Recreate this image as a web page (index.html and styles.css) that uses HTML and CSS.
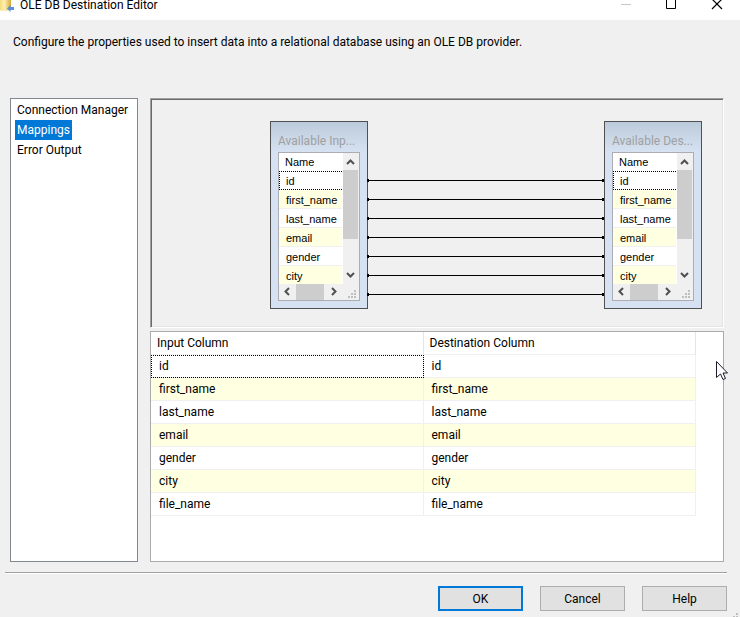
FILE: index.html
```
<!DOCTYPE html>
<html lang="en">
<head>
    <meta charset="UTF-8">
    <meta name="viewport" content="width=device-width, initial-scale=1.0">
    <title>OLE DB Destination Editor</title>
    <link rel="stylesheet" href="styles.css">
</head>
<body>
    <header class="titlebar">
        <svg class="app-icon" width="14" height="12" viewBox="0 0 14 12">
            <defs>
                <linearGradient id="gold">
                    <stop offset="0" stop-color="#f6dc7c"/>
                    <stop offset="0.4" stop-color="#fdf0b4"/>
                    <stop offset="1" stop-color="#d9a830"/>
                </linearGradient>
            </defs>
            <path d="M0 0H11V9Q8 11 4 11Q1 11 0 10Z" fill="url(#gold)"/>
            <path d="M7 8.500L10.500 5V7H14V10H10.500V12Z" fill="#5b8fd6"/>
        </svg>
        <h1>OLE DB Destination Editor</h1>
        <div class="window-buttons">
            <button type="button" aria-label="Minimize" disabled>
                <svg width="12" height="12" viewBox="0 0 12 12"><path d="M2 4.500H12" stroke="#c8c8c8"/></svg>
            </button>
            <button type="button" aria-label="Maximize">
                <svg width="12" height="12" viewBox="0 0 12 12"><path d="M1.500 -1.500H10.500V8.500H1.500Z" fill="none" stroke="#000"/></svg>
            </button>
            <button type="button" aria-label="Close">
                <svg width="12" height="12" viewBox="0 0 12 12"><path d="M1 -1L11 9M11 -1L1 9" stroke="#000" stroke-width="1.200"/></svg>
            </button>
        </div>
    </header>

    <p class="intro">Configure the properties used to insert data into a relational database using an OLE DB provider.</p>

    <main class="editor">
        <nav class="pages">
            <a href="#connection">Connection Manager</a>
            <a href="#mappings" class="selected">Mappings</a>
            <a href="#errors">Error Output</a>
        </nav>

        <div class="content">
            <section class="canvas">
                <div class="node">
                    <h2>Available Inp...</h2>
                    <div class="list">
                        <div class="list-rows">
                            <table>
                                <thead><tr><th>Name</th></tr></thead>
                                <tbody>
                                    <tr class="focused"><td>id</td></tr>
                                    <tr><td>first_name</td></tr>
                                    <tr><td>last_name</td></tr>
                                    <tr><td>email</td></tr>
                                    <tr><td>gender</td></tr>
                                    <tr><td>city</td></tr>
                                </tbody>
                            </table>
                        </div>
                        <div class="vscroll">
                            <svg width="15" height="17" viewBox="0 0 15 17"><path d="M4 11L7.500 7.500L11 11" class="arrow"/></svg>
                            <span class="thumb"></span>
                            <svg width="15" height="17" viewBox="0 0 15 17"><path d="M4 6L7.500 9.500L11 6" class="arrow"/></svg>
                        </div>
                        <div class="hscroll">
                            <svg width="17" height="16" viewBox="0 0 17 16"><path d="M10 4L6.500 7.500L10 11" class="arrow"/></svg>
                            <span class="thumb"></span>
                            <svg width="19" height="16" viewBox="0 0 19 16"><path d="M8 4L11.500 7.500L8 11" class="arrow"/></svg>
                        </div>
                        <svg class="grip" width="15" height="16" viewBox="0 0 15 16"><path d="M11 6h2v2h-2zM8 9h2v2h-2zM11 9h2v2h-2zM5 12h2v2h-2zM8 12h2v2h-2zM11 12h2v2h-2z"/></svg>
                    </div>
                </div>

                <div class="links">
                    <span></span>
                    <span></span>
                    <span></span>
                    <span></span>
                    <span></span>
                    <span></span>
                    <span></span>
                </div>

                <div class="node">
                    <h2>Available Des...</h2>
                    <div class="list">
                        <div class="list-rows">
                            <table>
                                <thead><tr><th>Name</th></tr></thead>
                                <tbody>
                                    <tr class="focused"><td>id</td></tr>
                                    <tr><td>first_name</td></tr>
                                    <tr><td>last_name</td></tr>
                                    <tr><td>email</td></tr>
                                    <tr><td>gender</td></tr>
                                    <tr><td>city</td></tr>
                                </tbody>
                            </table>
                        </div>
                        <div class="vscroll">
                            <svg width="15" height="17" viewBox="0 0 15 17"><path d="M4 11L7.500 7.500L11 11" class="arrow"/></svg>
                            <span class="thumb"></span>
                            <svg width="15" height="17" viewBox="0 0 15 17"><path d="M4 6L7.500 9.500L11 6" class="arrow"/></svg>
                        </div>
                        <div class="hscroll">
                            <svg width="17" height="16" viewBox="0 0 17 16"><path d="M10 4L6.500 7.500L10 11" class="arrow"/></svg>
                            <span class="thumb"></span>
                            <svg width="19" height="16" viewBox="0 0 19 16"><path d="M8 4L11.500 7.500L8 11" class="arrow"/></svg>
                        </div>
                        <svg class="grip" width="15" height="16" viewBox="0 0 15 16"><path d="M11 6h2v2h-2zM8 9h2v2h-2zM11 9h2v2h-2zM5 12h2v2h-2zM8 12h2v2h-2zM11 12h2v2h-2z"/></svg>
                    </div>
                </div>
            </section>

            <section class="grid">
                <table>
                    <thead>
                        <tr><th>Input Column</th><th>Destination Column</th></tr>
                    </thead>
                    <tbody>
                        <tr><td class="focused">id</td><td>id</td></tr>
                        <tr><td>first_name</td><td>first_name</td></tr>
                        <tr><td>last_name</td><td>last_name</td></tr>
                        <tr><td>email</td><td>email</td></tr>
                        <tr><td>gender</td><td>gender</td></tr>
                        <tr><td>city</td><td>city</td></tr>
                        <tr><td>file_name</td><td>file_name</td></tr>
                    </tbody>
                </table>
                <svg class="cursor" width="13" height="20" viewBox="0 0 13 20"><path d="M0.500 0.500V16.500L4.500 13L7 18.500L9.500 17.500L7 12H11.500Z" fill="#fff" stroke="#1a1a2a"/></svg>
            </section>
        </div>
    </main>

    <footer class="actions">
        <button type="button" class="default">OK</button>
        <button type="button">Cancel</button>
        <button type="button">Help</button>
    </footer>
    <svg class="size-grip" width="6" height="4" viewBox="0 0 6 4"><path d="M3 0h2v2h-2zM0 3h2v1h-2zM3 3h2v1h-2z"/></svg>
</body>
</html>
```

FILE: styles.css
```
* {
    box-sizing: border-box;
}
body {
    display: flex;
    flex-direction: column;
    min-height: 100vh;
    margin: 0;
    background-color: #f0f0f0;
    color: #000;
    font-family: "Segoe UI", Roboto, sans-serif;
    font-size: 12px;
    line-height: 20px;
}
h1, h2, p {
    margin: 0;
    font-size: 12px;
    font-weight: normal;
}
svg {
    display: block;
}
table {
    border-collapse: separate;
    border-spacing: 0;
    table-layout: fixed;
}
th, td {
    padding: 0;
    text-align: left;
    font-weight: normal;
}

/* title bar */
.titlebar {
    display: flex;
    height: 20px;
    background-color: #fff;
}
.titlebar h1 {
    flex: 1;
    margin-left: 6px;
    line-height: 10px;
}
.window-buttons {
    display: flex;
}
.window-buttons button {
    display: flex;
    justify-content: center;
    width: 46px;
    height: 12px;
    padding: 0;
    border: none;
    background: none;
}

.intro {
    padding: 12px 13px 46px;
}

/* page list and mapping area */
.editor {
    display: flex;
    flex: 1;
    gap: 12px;
    padding: 0 16px 10px 10px;
}
.pages {
    display: flex;
    flex-direction: column;
    align-items: flex-start;
    width: 128px;
    padding: 1px 4px;
    border: 1px solid #828790;
    background-color: #fff;
}
.pages a {
    padding: 0 2px;
    color: #000;
    text-decoration: none;
    white-space: nowrap;
}
.pages .selected {
    background-color: #0078d7;
    color: #fff;
}
.content {
    display: flex;
    flex: 1;
    flex-direction: column;
    gap: 3px;
    min-width: 0;
}

/* diagram */
.canvas {
    display: flex;
    align-items: flex-start;
    height: 230px;
    padding: 22px 21px 0 119px;
    border: 1px solid;
    border-color: #a0a0a0 #fff #fff #a0a0a0;
    box-shadow: inset 1px 1px #696969, inset -1px -1px #e3e3e3;
}
.node {
    width: 98px;
    height: 188px;
    padding: 9px 7px 7px;
    border: 1px solid #505050;
    background: linear-gradient(#bccbdb, #d6e2f1 30px);
}
.node h2 {
    height: 21px;
    color: #a0a0a0;
    white-space: nowrap;
}
.list {
    display: grid;
    grid-template-columns: 64px 1fr;
    grid-template-rows: 131px 1fr;
    height: 149px;
    border: 1px solid #abadb3;
    background-color: #f0f0f0;
    font-family: "Liberation Sans", sans-serif;
    font-size: 11px;
}
.list-rows {
    overflow: hidden;
    background-color: #fff;
}
.list table {
    width: 63px;
}
.list th {
    height: 18px;
    padding-left: 6px;
    line-height: 18px;
}
.list td {
    height: 19px;
    padding: 2px 0 0 7px;
    border-bottom: 1px solid #f0f0f0;
    line-height: 16px;
}
.list .focused td {
    padding: 1px 0 0 6px;
    border: 1px dotted #000;
    border-right: none;
}
tbody tr:nth-child(even) td {
    background-color: #ffffe1;
}
.vscroll {
    display: flex;
    flex-direction: column;
    width: 15px;
}
.vscroll .thumb {
    height: 69px;
    margin-bottom: auto;
    background-color: #cdcdcd;
}
.hscroll {
    display: flex;
}
.hscroll .thumb {
    flex: 1;
    background-color: #cdcdcd;
}
.arrow {
    fill: none;
    stroke: #505050;
    stroke-width: 2;
}
.grip, .size-grip {
    fill: #bfbfbf;
}

/* connectors between the two column lists */
.links {
    display: flex;
    flex: 1;
    flex-direction: column;
    gap: 18px;
    padding-top: 59px;
}
.links span {
    position: relative;
    height: 1px;
    background-color: #000;
}
.links span::before, .links span::after {
    content: "";
    position: absolute;
    top: -1px;
    width: 2px;
    height: 3px;
    background-color: #000;
}
.links span::before {
    left: -1px;
}
.links span::after {
    right: 0;
}

/* mapping grid */
.grid {
    position: relative;
    flex: 1;
    border: 1px solid #ababab;
    background-color: #fff;
}
.grid table {
    width: 545px;
}
.grid th {
    height: 23px;
    padding-left: 6px;
    border-right: 1px solid #e5e5e5;
    border-bottom: 1px solid #f0f0f0;
}
.grid td {
    height: 23px;
    padding-left: 8px;
    border-right: 1px solid #f0f0f0;
    border-bottom: 1px solid #f0f0f0;
}
.grid .focused {
    outline: 1px dotted #000;
    outline-offset: -1px;
}
.cursor {
    position: absolute;
    top: 29px;
    right: -6px;
}

/* bottom buttons */
.actions {
    display: flex;
    justify-content: flex-end;
    gap: 17px;
    margin: 0 13px 0 5px;
    padding: 13px 0 6px;
    border-top: 1px solid #a0a0a0;
    box-shadow: inset 0 1px #fff;
}
.actions button {
    width: 85px;
    height: 25px;
    padding: 0;
    border: 1px solid #adadad;
    background-color: #e1e1e1;
    color: #000;
    font: inherit;
}
.actions .default {
    border: 2px solid #0078d7;
}
.size-grip {
    position: absolute;
    right: 1px;
    bottom: 0;
}
```
